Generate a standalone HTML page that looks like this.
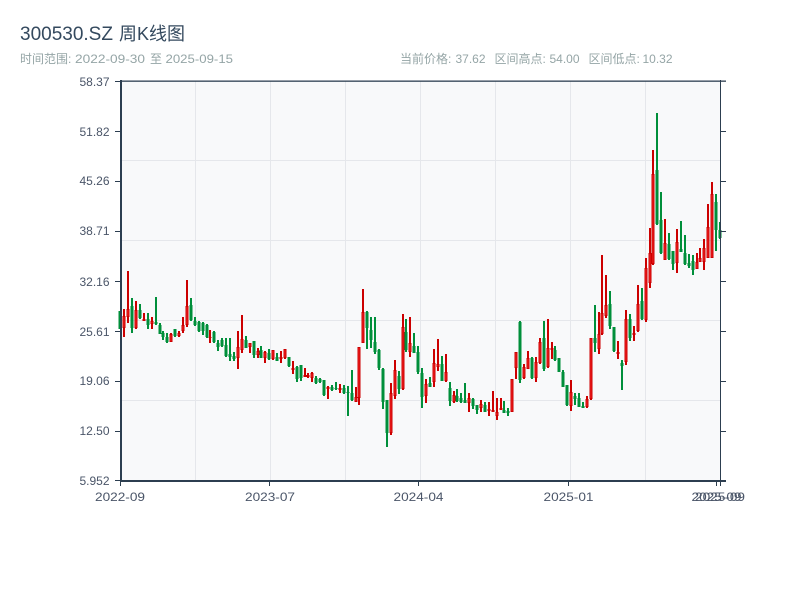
<!DOCTYPE html>
<html><head><meta charset="utf-8">
<style>
html,body{margin:0;padding:0;background:#fff;width:800px;height:600px;overflow:hidden}
svg{position:absolute;left:0;top:0}
text{font-family:"Liberation Sans","WenQuanYi Zen Hei","Noto Sans CJK SC",sans-serif}
</style></head><body>
<svg id="s" width="800" height="600" xmlns="http://www.w3.org/2000/svg">
<rect x="121" y="81" width="599" height="400" fill="#f8f9fa"/>
<g stroke="#e5e7eb" stroke-width="1">
<path d="M121 160.5H720M121 240.5H720M121 320.5H720M121 400.5H720"/>
<path d="M195.5 81V481M270.5 81V481M345.5 81V481M420.5 81V481M495.5 81V481M570.5 81V481M645.5 81V481"/>
</g>
<path id="g" fill="#008f3a" stroke="none"/>
<path id="r1" fill="#cc0000" stroke="none"/>
<path id="r2" fill="#e81818" stroke="none"/>
<g fill="#2c3e50">
<rect x="120" y="80" width="2" height="402"/>
<rect x="120" y="80.5" width="606" height="1.3"/>
<rect x="120" y="480" width="606" height="2"/>
<rect x="720" y="80" width="1" height="401"/>
</g>
<g stroke="#2c3e50" stroke-width="1">
<path d="M115 81.5H121M115 131.5H121M115 181.5H121M115 231.5H121M115 281.5H121M115 331.5H121M115 381.5H121M115 431.5H121M115 480.5H121"/>
<path d="M720 131.5H726M720 181.5H726M720 231.5H726M720 281.5H726M720 331.5H726M720 381.5H726M720 431.5H726"/>
<path d="M120.5 481V486M269.5 481V486M418.5 481V486M568.5 481V486M716.5 481V486M720.5 481V486"/>
</g>
<g fill="#34495e">
<text x="20" y="40" font-size="19">300530.SZ</text>
<text x="119" y="40" font-size="18">周K线图</text>
</g>
<g font-size="12" fill="#95a5a6">
<text x="20" y="63">时间范围:</text>
<text x="75" y="63" textLength="70" lengthAdjust="spacingAndGlyphs">2022-09-30</text>
<text x="150" y="63">至</text>
<text x="165.5" y="63" textLength="67.5" lengthAdjust="spacingAndGlyphs">2025-09-15</text>
<text x="400" y="63">当前价格:</text>
<text x="455.5" y="63">37.62</text>
<text x="494.5" y="63">区间高点:</text>
<text x="549.5" y="63">54.00</text>
<text x="588.5" y="63">区间低点:</text>
<text x="642.5" y="63">10.32</text>
</g>
<g font-size="12" fill="#4a5568" text-anchor="end">
<text x="109.5" y="86">58.37</text>
<text x="109.5" y="136">51.82</text>
<text x="109.5" y="185">45.26</text>
<text x="109.5" y="235">38.71</text>
<text x="109.5" y="286">32.16</text>
<text x="109.5" y="336">25.61</text>
<text x="109.5" y="385">19.06</text>
<text x="109.5" y="435">12.50</text>
<text x="109.5" y="485">5.952</text>
</g>
<g font-size="12" fill="#4a5568">
<text x="95" y="501" textLength="50" lengthAdjust="spacingAndGlyphs">2022-09</text>
<text x="245" y="501" textLength="50" lengthAdjust="spacingAndGlyphs">2023-07</text>
<text x="393.5" y="501" textLength="50" lengthAdjust="spacingAndGlyphs">2024-04</text>
<text x="543.5" y="501" textLength="50" lengthAdjust="spacingAndGlyphs">2025-01</text>
<text x="691.5" y="501" textLength="50" lengthAdjust="spacingAndGlyphs">2025-09</text>
<text x="695" y="501" textLength="50" lengthAdjust="spacingAndGlyphs">2025-09</text>
</g>
</svg>
<script>
var D="g311,329,311,329 r309,337,316,328 r271,323,309,317 g298,333,306,328 r301,329,310,328 g304,319,310,318 r313,321,319,321 g313,329,319,325 r317,329,321,324 g297,325,322,324 g323,334,325,334 g331,340,333,337 g333,343,337,342 r333,342,334,342 g329,337,329,336 r331,337,333,336 r317,333,325,331 r280,327,306,325 g298,321,305,320 g317,326,321,325 g321,332,322,331 g322,335,323,331 g324,338,325,337 r330,343,337,338 g331,343,332,342 g340,351,343,347 g338,347,340,346 g338,357,345,356 g338,361,354,357 g352,361,356,359 r331,369,347,358 r315,353,339,350 g336,348,340,348 r343,353,343,347 g341,358,341,355 r348,358,351,355 g346,358,350,358 r351,363,352,358 g349,360,353,359 r350,360,350,359 g353,361,357,361 r351,363,357,359 r349,359,349,358 g357,367,357,366 r361,374,368,370 g366,382,367,379 g365,381,365,378 r368,377,375,377 r373,378,375,377 r372,382,373,378 g376,384,378,383 g378,383,379,382 g380,396,380,395 r386,399,387,389 g385,391,387,390 g382,390,388,389 r384,393,388,390 g385,394,388,393 g386,416,392,393 g370,401,393,400 r387,402,397,402 r347,405,347,398 r289,343,312,343 g311,349,312,328 g317,348,330,340 g317,354,342,352 g349,370,350,368 g368,409,369,402 g400,447,400,433 r383,435,393,433 r360,399,370,396 g371,394,376,389 r314,390,327,389 g319,352,332,350 r317,357,343,352 g333,353,346,353 g346,374,352,372 g368,408,373,397 r379,403,384,396 g377,387,383,387 r349,387,363,382 r339,371,364,367 g356,381,364,381 r354,382,372,381 g382,406,388,401 r391,403,395,402 g389,402,396,401 g393,403,398,402 g383,403,400,403 r393,412,398,403 g398,409,399,406 g405,414,405,410 r400,412,404,408 g402,412,405,412 r402,416,409,411 r391,412,410,412 r398,420,412,416 r398,410,408,410 g401,413,410,413 g408,416,411,413 r379,412,379,412 r352,379,352,368 g321,383,322,380 r364,379,367,378 r351,369,358,369 g357,379,358,378 r357,382,362,378 r338,364,342,363 g321,371,338,369 r319,368,348,367 r342,359,348,350 g346,361,350,360 g358,372,358,372 g370,387,372,387 g385,406,385,405 r380,411,392,406 g393,405,396,399 g393,407,398,407 g402,408,406,408 r396,408,399,407 r338,400,338,399 g305,352,338,343 r312,354,334,349 r255,335,313,334 r275,318,305,316 g291,329,304,326 g327,352,327,351 r341,359,352,354 g360,390,363,366 r310,365,319,362 g314,341,319,338 r326,341,333,335 r285,332,304,331 g288,320,301,319 r258,322,268,320 r228,288,253,283 r150,265,174,264 g113,225,170,224 g192,254,220,253 r219,260,243,260 g233,260,244,259 g251,270,251,264 r229,273,242,263 g221,252,249,252 g235,265,253,264 g254,268,263,266 g255,275,261,270 r253,269,262,269 r248,262,258,262 r239,270,248,262 r204,258,227,258 r182,258,194,258 g194,251,202,230 g222,239,230,238".split(" ");
var g="",r1="",r2="";
function R(x,y,w,h){return "M"+x+" "+y+"h"+w+"v"+h+"h"+(-w)+"z";}
D.forEach(function(s,i){
var c=s[0],a=s.slice(1).split(",").map(Number),x=120.3+i*3.92;
var hi=a[0],lo=a[1],t=a[2],b=a[3];if(b-t<1)b=t+1;
var L=Math.round(x-1);
var wick=R(L,hi,2,lo-hi),body=R(L-0.5,t,3,b-t);
if(c=="g"){g+=wick+body;}
else{r1+=wick+body;if(b-t>2)r2+=R(L+0.2,t+1,1.4,b-t-2);}
});
document.getElementById("g").setAttribute("d",g);
document.getElementById("r1").setAttribute("d",r1);
document.getElementById("r2").setAttribute("d",r2);
</script>
</body></html>
